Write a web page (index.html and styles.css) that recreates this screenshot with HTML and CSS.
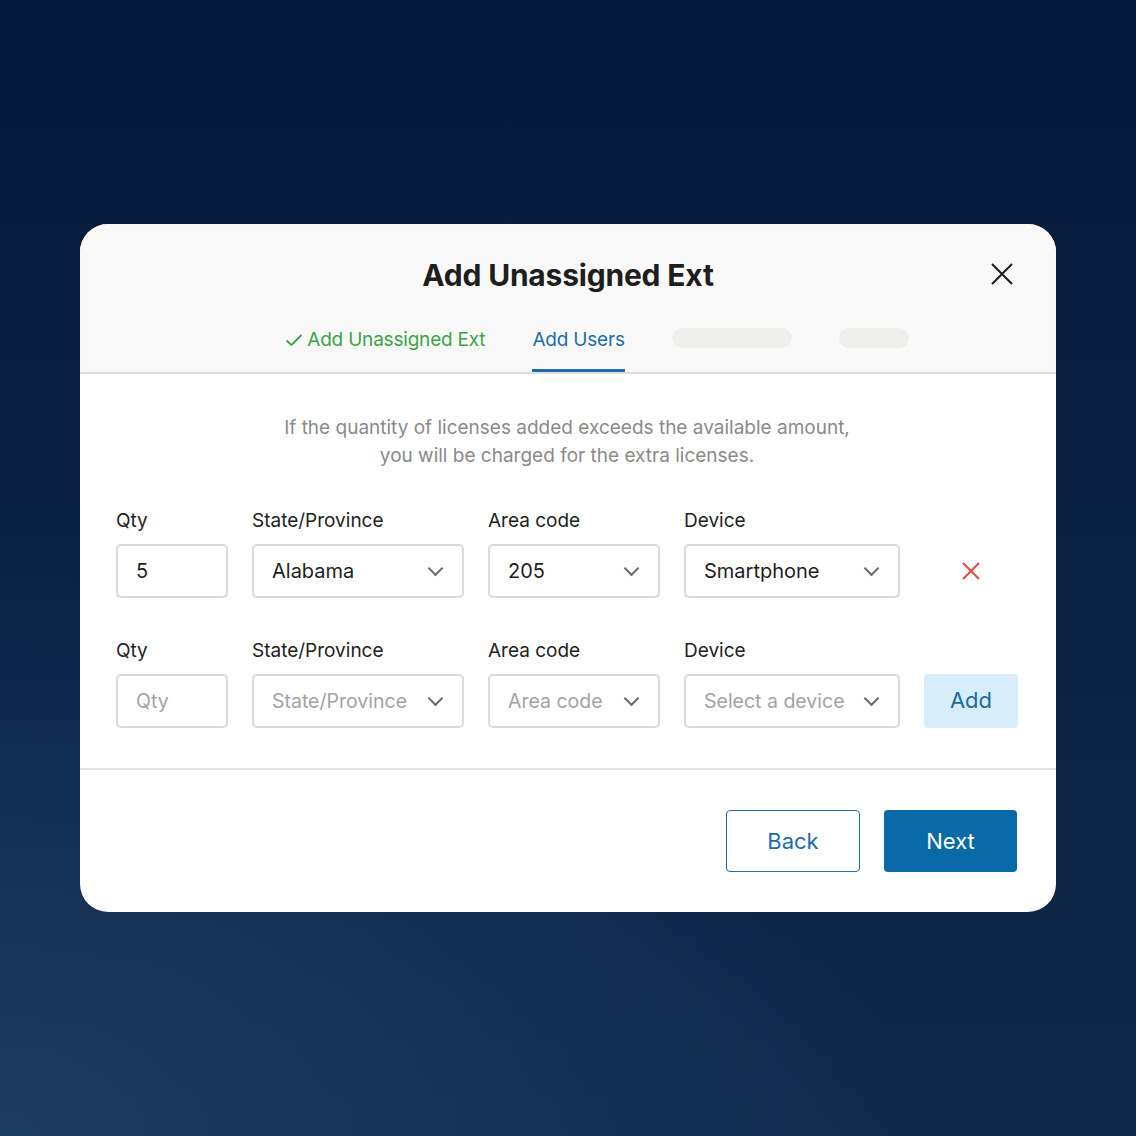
FILE: index.html
```html
<!DOCTYPE html>
<html lang="en">
<head>
  <meta charset="UTF-8" />
  <meta name="viewport" content="width=device-width, initial-scale=1.0" />
  <title>Add Unassigned Ext</title>
  <link rel="stylesheet" href="styles.css">
</head>
<body>
<div class="modal">
  <!-- Cabecera con titulo y pasos -->
  <div class="modal-header">
    <h2 class="modal-title">Add Unassigned Ext</h2>
    <button class="close-btn" aria-label="Close">
      <svg width="24" height="24" viewBox="0 0 24 24"><path d="M2 2 L22 22 M22 2 L2 22" stroke="#1b1b1b" stroke-width="2" fill="none"/></svg>
    </button>
    <div class="steps">
      <span class="step done">
        <svg width="18" height="14" viewBox="0 0 18 14"><path d="M1.5 7.5 L6.5 12 L16.5 2" stroke="#3aa547" stroke-width="1.8" fill="none"/></svg>
        Add Unassigned Ext
      </span>
      <span class="step active">Add Users</span>
      <span class="step-skeleton wide"></span>
      <span class="step-skeleton narrow"></span>
    </div>
  </div>

  <div class="modal-body">
    <p class="notice">If the quantity of licenses added exceeds the available amount,<br />you will be charged for the extra licenses.</p>

    <div class="line-row">
      <div class="field">
        <label>Qty</label>
        <div class="box">5</div>
      </div>
      <div class="field">
        <label>State/Province</label>
        <div class="box select">Alabama<span class="chev"></span></div>
      </div>
      <div class="field">
        <label>Area code</label>
        <div class="box select">205<span class="chev"></span></div>
      </div>
      <div class="field">
        <label>Device</label>
        <div class="box select">Smartphone<span class="chev"></span></div>
      </div>
      <div class="field action">
        <button class="remove-btn" aria-label="Remove">
          <svg width="20" height="20" viewBox="0 0 20 20"><path d="M2 2 L18 18 M18 2 L2 18" stroke="#e5483f" stroke-width="2" fill="none"/></svg>
        </button>
      </div>
    </div>

    <div class="line-row">
      <div class="field">
        <label>Qty</label>
        <div class="box empty">Qty</div>
      </div>
      <div class="field">
        <label>State/Province</label>
        <div class="box select empty">State/Province<span class="chev"></span></div>
      </div>
      <div class="field">
        <label>Area code</label>
        <div class="box select empty">Area code<span class="chev"></span></div>
      </div>
      <div class="field">
        <label>Device</label>
        <div class="box select empty">Select a device<span class="chev"></span></div>
      </div>
      <div class="field action">
        <button class="add-btn">Add</button>
      </div>
    </div>
  </div>

  <div class="modal-footer">
    <button class="btn btn-outline">Back</button>
    <button class="btn btn-primary">Next</button>
  </div>
</div>
</body>
</html>
```

FILE: styles.css
```css
* {
  box-sizing: border-box;
}

body {
  margin: 0;
  height: 1136px;
  font-family: "Inter", "Liberation Sans", sans-serif;
  background:
    radial-gradient(ellipse 900px 600px at 0% 100%, #1d3b5f 0%, rgba(29,59,95,0) 100%),
    linear-gradient(180deg, #031a3a 0%, #0a2244 60%, #112a4c 100%);
  display: flex;
  justify-content: center;
  padding-top: 224px;
}

.modal {
  width: 976px;
  height: 688px;
  background: #fff;
  border-radius: 28px;
  overflow: hidden;
  display: flex;
  flex-direction: column;
}

/* cabecera */
.modal-header {
  position: relative;
  background: #f9f9f9;
  border-bottom: 2px solid #dedede;
  padding-top: 32px;
}

.modal-title {
  margin: 0;
  text-align: center;
  font-size: 30px;
  line-height: 38px;
  font-weight: 700;
  color: #1e1e1e;
  letter-spacing: -0.2px;
}

.close-btn {
  position: absolute;
  top: 38px;
  right: 42px;
  background: none;
  border: none;
  padding: 0;
  cursor: pointer;
}

.steps {
  display: flex;
  justify-content: center;
  align-items: flex-start;
  gap: 47px;
  margin-top: 34px;
  padding-left: 58px;
}

.step {
  font-size: 19px;
  line-height: 24px;
  padding-bottom: 17px;
  border-bottom: 3px solid transparent;
  display: flex;
  align-items: center;
  gap: 4px;
  letter-spacing: -0.2px;
}

.step.done {
  color: #3aa547;
}

.step.active {
  color: #1f6cab;
  border-bottom-color: #1f6cab;
}

.step-skeleton {
  height: 20px;
  border-radius: 10px;
  background: #efeeea;
}

.step-skeleton.wide {
  width: 120px;
}

.step-skeleton.narrow {
  width: 70px;
}

/* cuerpo */
.modal-body {
  padding: 40px 38px 40px 36px;
  border-bottom: 2px solid #e3e3e3;
}

.notice {
  margin: 0 0 40px;
  text-align: center;
  color: #8a8a8a;
  font-size: 19px;
  line-height: 28px;
}

.line-row {
  display: grid;
  grid-template-columns: 112px 212px 172px 216px 94px;
  gap: 24px;
  margin-bottom: 42px;
}

.line-row:last-child {
  margin-bottom: 0;
}

.field label {
  display: block;
  font-size: 19px;
  line-height: 22px;
  color: #222;
  margin-bottom: 12px;
}

.box {
  position: relative;
  height: 54px;
  border: 2px solid #dadada;
  border-radius: 5px;
  padding: 0 18px;
  display: flex;
  align-items: center;
  font-size: 20px;
  color: #1e1e1e;
  white-space: nowrap;
  overflow: hidden;
}

.box.empty {
  color: #a3a3a3;
  font-size: 19.5px;
}

.chev {
  position: absolute;
  right: 21px;
  top: 17px;
  width: 11px;
  height: 11px;
  border-right: 2px solid #6b6b6b;
  border-bottom: 2px solid #6b6b6b;
  transform: rotate(45deg);
}

.field.action {
  display: flex;
  align-items: flex-end;
}

.remove-btn {
  width: 94px;
  height: 54px;
  background: none;
  border: none;
  cursor: pointer;
  display: flex;
  align-items: center;
  justify-content: center;
}

.add-btn {
  width: 94px;
  height: 54px;
  background: #d8edfa;
  color: #1a6aa6;
  border: none;
  border-radius: 4px;
  font-family: inherit;
  font-size: 22px;
  cursor: pointer;
  padding-bottom: 3px;
}

/* pie */
.modal-footer {
  display: flex;
  justify-content: flex-end;
  gap: 24px;
  padding: 40px 39px 40px 0;
}

.btn {
  height: 62px;
  width: 134px;
  border-radius: 4px;
  font-family: inherit;
  font-size: 22px;
  cursor: pointer;
}

.btn-outline {
  background: #fff;
  border: 1.5px solid #1f6cab;
  color: #1f6cab;
}

.btn-primary {
  width: 133px;
  background: #0a6aa8;
  border: none;
  color: #fff;
}
```
